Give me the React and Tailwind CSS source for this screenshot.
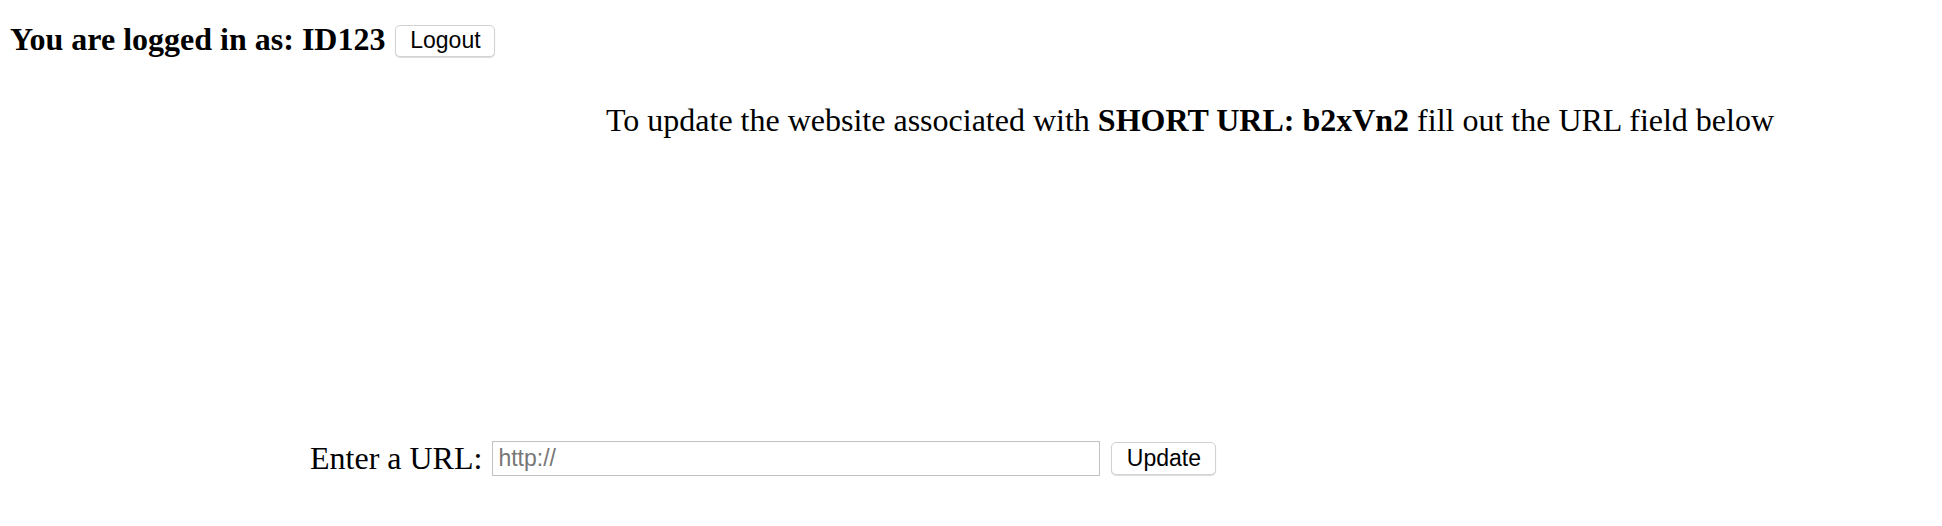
import React, { useState } from 'react';

function App() {
  const [url, setUrl] = useState('');

  return (
    <div className="min-h-[526px] bg-white text-black text-[32px] leading-[37px] font-['Liberation_Serif',serif]">
      {/* Header */}
      <div className="flex items-center pl-[10px] pt-[21px]">
        <span className="font-bold">You are logged in as: ID123</span>
        <button className="ml-[10px] mt-[2px] h-[32px] w-[100px] bg-white border border-[#d2d2d2] rounded-[5px] shadow-[0_1px_1px_rgba(0,0,0,0.14)] text-[23px] leading-none font-['Liberation_Sans',sans-serif]">
          Logout
        </button>
      </div>

      {/* Message */}
      <p className="mt-[44px] pl-[606px]">
        To update the website associated with <b>SHORT URL: b2xVn2</b> fill out the URL field below
      </p>

      {/* Form */}
      <div className="mt-[301px] pl-[310px] flex items-center">
        <label htmlFor="url">Enter a URL:</label>
        <input
          id="url"
          type="text"
          value={url}
          onChange={(e) => setUrl(e.target.value)}
          placeholder="http://"
          className="ml-[10px] w-[608px] h-[35px] px-[5px] border border-[#c2c2c2] text-[23px] placeholder-[#777777] font-['Liberation_Sans',sans-serif] focus:outline-none"
        />
        <button className="ml-[11px] h-[33px] w-[105px] bg-white border border-[#d2d2d2] rounded-[5px] shadow-[0_1px_1px_rgba(0,0,0,0.14)] text-[23px] leading-none font-['Liberation_Sans',sans-serif]">
          Update
        </button>
      </div>
    </div>
  );
}

export default App;
